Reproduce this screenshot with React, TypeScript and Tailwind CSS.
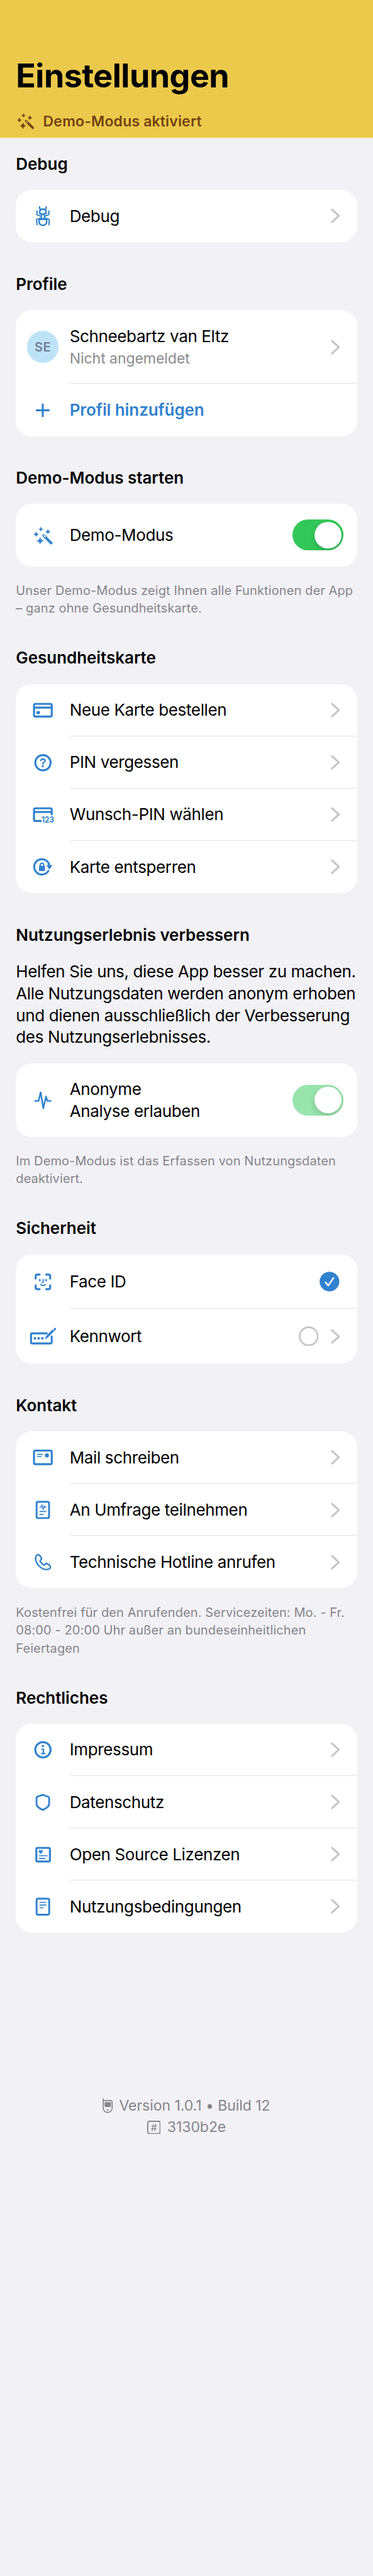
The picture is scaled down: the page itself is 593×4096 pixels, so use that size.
import type { ReactNode } from "react";

const stroke = {
  fill: "none",
  stroke: "currentColor",
  strokeWidth: 6,
  strokeLinecap: "round" as const,
  strokeLinejoin: "round" as const,
};

function Icon({ children, className = "h-[50.6px] w-[50.6px]" }: { children: ReactNode; className?: string }) {
  return (
    <svg viewBox="0 0 96 96" className={`shrink-0 ${className}`} {...stroke}>
      {children}
    </svg>
  );
}

const Star = ({ x, y, rx, ry }: { x: number; y: number; rx: number; ry: number }) => (
  <path
    d={`M${x} ${y - ry} Q${x + rx * 0.16} ${y - ry * 0.16} ${x + rx} ${y} Q${x + rx * 0.16} ${y + ry * 0.16} ${x} ${y + ry} Q${x - rx * 0.16} ${y + ry * 0.16} ${x - rx} ${y} Q${x - rx * 0.16} ${y - ry * 0.16} ${x} ${y - ry}Z`}
    fill="currentColor"
    strokeWidth="1.2"
  />
);

const WandShapes = ({ tip }: { tip: string }) => (
  <>
    <Star x={41.5} y={29.3} rx={6} ry={5.8} />
    <Star x={63} y={37} rx={7} ry={6.8} />
    <Star x={27.5} y={44.8} rx={7} ry={6.8} />
    <Star x={39.5} y={64.3} rx={10} ry={9.8} />
    <path d="M50 48.2 L73 71" strokeWidth="8" />
    <path d="M50.3 48.5 L55 53.2" stroke={tip} strokeWidth="2.6" />
  </>
);

const BugIcon = () => (
  <Icon>
    <path d="M38 20.5 C36.5 24 38 27 42 30 M57.5 20.5 C59 24 57.5 27 53.5 30" strokeWidth="4" />
    <path d="M47.8 27.5 C41 27.5 38.2 31 38.2 36 C38.2 40 39 42.3 42 42.3 H53.6 C56.5 42.3 57.4 40 57.4 36 C57.4 31 54.5 27.5 47.8 27.5Z" strokeWidth="4.6" />
    <path d="M44.5 44 L42.8 50 L45 56.5 M51 44 L52.8 50 L50.6 56.5" strokeWidth="4" />
    <path d="M30 33.5 V42.5 Q30 44.6 32 45.3 L41.5 49 M65.8 33.5 V42.5 Q65.8 44.6 63.8 45.3 L54 49" strokeWidth="4" />
    <path d="M42.5 54.5 L31 57.8 Q28.4 58.8 28.6 61 L30.2 74.5 M53.3 54.5 L64.8 57.8 Q67.4 58.8 67.2 61 L65.6 74.5" strokeWidth="4" />
    <path d="M40.5 58.3 H55.2 Q59.5 58.3 59.5 63 C59.5 71 55 76.5 47.8 76.5 C40.6 76.5 36.2 71 36.2 63 Q36.2 58.3 40.5 58.3Z" strokeWidth="4.8" />
  </Icon>
);

const PlusIcon = () => (
  <Icon>
    <path d="M47.3 30.5 V66 M29 48.3 H65.5" strokeWidth="6" />
  </Icon>
);

const WandIcon = () => (
  <Icon>
    <WandShapes tip="#fff" />
  </Icon>
);

const CardIcon = () => (
  <Icon>
    <rect x="21" y="29" width="53.5" height="38" rx="4" />
    <path d="M21 40 H74.5" strokeLinecap="butt" />
    <rect x="28" y="50.7" width="11" height="9.3" rx="2.5" fill="currentColor" stroke="none" />
  </Icon>
);

const QuestionIcon = () => (
  <Icon>
    <circle cx="48" cy="48.8" r="23.1" />
    <path d="M41.6 42.4 C42 39 44.5 37.9 47.6 37.9 C51.6 37.9 54.5 39.8 54.5 42.9 C54.5 47.6 47.6 47.6 47.6 52" strokeWidth="4.4" />
    <circle cx="47.6" cy="59.2" r="3.2" fill="currentColor" stroke="none" />
  </Icon>
);

const PinIcon = () => (
  <Icon>
    <path d="M74.5 50 V33 Q74.5 29 70.5 29 H25 Q21 29 21 33 V63 Q21 67 25 67 H44" strokeLinecap="butt" />
    <path d="M21 40 H74.5" strokeLinecap="butt" />
    <text
      x="43.8"
      y="71.8"
      textLength="37.6"
      lengthAdjust="spacingAndGlyphs"
      fontSize="25"
      fontWeight="700"
      fill="currentColor"
      stroke="none"
    >
      123
    </text>
  </Icon>
);

const UnlockIcon = () => (
  <Icon>
    <path d="M67.6 45 A23.1 23.1 0 1 0 64.4 60.2" />
    <path d="M60.5 44 H74.5 L67.5 54.5Z" fill="currentColor" strokeWidth="2.4" />
    <rect x="36" y="44.8" width="18" height="16" rx="2.2" fill="currentColor" stroke="none" />
    <path d="M39.8 46 V42 C39.8 35.4 50.2 35.4 50.2 42 V46" strokeWidth="3.6" />
  </Icon>
);

const PulseIcon = () => (
  <Icon>
    <path d="M24.5 50.2 H34.8 L41 24.5 L49 72.5 L57.3 37 L61 50.2 H71.2" strokeWidth="4.8" />
  </Icon>
);

const FaceIcon = () => (
  <Icon>
    <path d="M26 38 V31 Q26 26 31 26 H37.8 M58 26 H64.7 Q69.7 26 69.7 31 V38 M69.7 58.3 V65 Q69.7 70 64.7 70 H58 M37.8 70 H31 Q26 70 26 65 V58.3" />
    <path d="M38.5 41.3 V44.3 M57.2 41.3 V44.3" strokeWidth="4.8" />
    <path d="M48.6 40.6 V48.6 Q48.6 50.6 45.4 50.6" strokeWidth="3.6" />
    <path d="M40.8 56 Q48.2 61.5 55.6 56" strokeWidth="3.6" />
  </Icon>
);

const PasswordIcon = () => (
  <Icon className="h-[50.6px] w-[50.6px] overflow-visible">
    <path d="M62 40 H16 Q12 40 12 44 V66.5 Q12 70.5 16 70.5 H70.4 Q74.4 70.5 74.4 66.5 V47" strokeLinecap="butt" />
    <circle cx="23.8" cy="55.2" r="3.9" fill="currentColor" stroke="none" />
    <circle cx="35" cy="55.2" r="3.9" fill="currentColor" stroke="none" />
    <circle cx="46.2" cy="55.2" r="3.9" fill="currentColor" stroke="none" />
    <path d="M54.6 56.2 L58.5 48.4 L76.5 29.6 L81 33.4 L62.5 52.2Z" fill="currentColor" strokeWidth="1.6" />
    <path d="M82.6 28.6 L84.6 26.6" strokeWidth="6" />
  </Icon>
);

const MailIcon = () => (
  <Icon>
    <rect x="21" y="27.5" width="53.5" height="41" rx="3.5" />
    <path d="M31.5 39.2 H46.5 M31.5 46 H42.5" strokeWidth="3.2" />
    <circle cx="59.8" cy="42.2" r="6.1" fill="currentColor" stroke="none" />
  </Icon>
);

const SurveyIcon = () => (
  <Icon>
    <rect x="28.8" y="24.8" width="37.6" height="49" rx="4" strokeWidth="5.6" />
    <path d="M38.5 41 H42.3 L45 33.5 L48.5 48 L51.8 36.5 L53.6 41 H57.5" strokeWidth="2.8" />
    <path d="M38.5 54 H57 M38.5 62.8 H48.5" strokeWidth="3.2" />
  </Icon>
);

const PhoneIcon = () => (
  <Icon>
    <path
      d="M34 26.6 C29.5 26.4 25.8 30.5 25.8 38 C25.8 54 43 71.4 58.5 71.4 C66.5 71.4 70.6 67.5 70.6 63.6 C70.6 62 69.8 60.6 68.4 59.4 L61.5 54 C59.5 52.6 57.8 52.8 56.2 54.4 L53.4 57.2 C52.4 58.2 51 58.2 49.6 57.2 C46.2 54.8 42.6 51.2 40 47.6 C39 46.2 39 44.9 40 43.9 L42.8 41.2 C44.3 39.7 44.4 38 43.2 36.2 L38.2 29 C37 27.3 35.8 26.6 34 26.6Z"
      strokeWidth="4.6"
    />
  </Icon>
);

const InfoIcon = () => (
  <Icon>
    <circle cx="48" cy="48" r="23.1" />
    <circle cx="47.8" cy="36.7" r="3.6" fill="currentColor" stroke="none" />
    <path d="M44.8 46 H49.3 V59.4 M44 59.4 H54" strokeWidth="4.2" />
  </Icon>
);

const ShieldIcon = () => (
  <Icon>
    <path
      d="M47.5 26.3 L64.2 32.2 Q66.6 33 66.6 35.6 V53 C66.6 62 58.5 66.2 47.5 72 C36.5 66.2 28.6 62 28.6 53 V35.6 Q28.6 33 31 32.2Z"
      strokeWidth="5.4"
    />
  </Icon>
);

const LicenseIcon = () => (
  <Icon>
    <rect x="28" y="29" width="41" height="41" rx="4" />
    <path d="M41.4 46 C37 43 35.6 41 35.6 38.8 C35.6 35.4 39.6 34.6 41.4 37.6 C43.2 34.6 47.2 35.4 47.2 38.8 C47.2 41 45.8 43 41.4 46Z" fill="currentColor" strokeWidth="1" />
    <path d="M37 52.7 H60.3 M37 60.8 H54.3" strokeWidth="3.2" />
  </Icon>
);

const TermsIcon = () => (
  <Icon>
    <rect x="28.8" y="24.5" width="38" height="48.5" rx="4" strokeWidth="5.6" />
    <path d="M39 36 H57 M39 44 H57 M39 52.2 H48.3" strokeWidth="3.2" />
  </Icon>
);

const Chevron = () => (
  <svg viewBox="0 0 28 46" className="h-[24.3px] w-[14.8px] shrink-0 text-[#c5c5c7]" {...stroke}>
    <path d="M3.5 4 L24 23 L3.5 42" strokeWidth="5.8" />
  </svg>
);

function Toggle({ dimmed = false }: { dimmed?: boolean }) {
  return (
    <div
      className={`mr-[-5px] flex h-[49px] w-[80.6px] shrink-0 items-center justify-end overflow-hidden rounded-full pr-[3.2px] ${dimmed ? "bg-[#99e4ac]" : "bg-[#34c759]"}`}
    >
      <div className="size-[42.6px] rounded-full bg-white shadow-[0_4px_10px_rgba(0,0,0,0.16)]" />
    </div>
  );
}

function Card({ children }: { children: ReactNode }) {
  return <div className="overflow-hidden rounded-[25.3px] bg-white">{children}</div>;
}

function Row({
  icon,
  label,
  trailing = <Chevron />,
  height = "h-[83.1px]",
  divider = false,
}: {
  icon: ReactNode;
  label: ReactNode;
  trailing?: ReactNode;
  height?: string;
  divider?: boolean;
}) {
  return (
    <div className={`flex pl-[17.4px] ${height}`}>
      <div className="flex w-[50.6px] shrink-0 items-center text-[#3182ce]">{icon}</div>
      <div
        className={`ml-[17.4px] flex min-w-0 flex-1 items-center justify-between pr-[26.9px] ${divider ? "border-b border-[#e2e2e4] pt-px" : ""}`}
      >
        <div className="pt-px text-[26px] leading-[34.8px] tracking-[-0.014em]">{label}</div>
        {trailing}
      </div>
    </div>
  );
}

function Heading({ children }: { children: ReactNode }) {
  return <h2 className="pt-[0.6px] text-[26px] font-semibold leading-[34.8px] tracking-[-0.002em]">{children}</h2>;
}

function Note({ children }: { children: ReactNode }) {
  return (
    <p className="mt-[23.6px] whitespace-nowrap pt-[0.6px] text-[20px] leading-[28.5px] tracking-[0.005em] text-[#86858a]">
      {children}
    </p>
  );
}

function Section({ title, className = "mt-[49.4px]", children }: { title: string; className?: string; children: ReactNode }) {
  return (
    <section className={className}>
      <Heading>{title}</Heading>
      <div className="mt-[23.4px]">{children}</div>
    </section>
  );
}

export default function App() {
  return (
    <div className="min-h-[4096px] w-full bg-[#f2f1f6] font-['Inter',sans-serif] text-black">
      <header className="h-[219px] bg-[#ecc94b] px-[25.3px] pt-[91px]">
        <h1 className="text-[52px] font-bold leading-[60px] tracking-[-0.0103em]">Einstellungen</h1>
        <div className="ml-[-7.3px] mt-6 flex h-[34.6px] items-center gap-[5.6px] text-[#744210]">
          <Icon className="size-[45px]">
            <WandShapes tip="#ecc94b" />
          </Icon>
          <span className="pt-px text-[23px] font-semibold leading-[34.6px] tracking-[0.0073em]">Demo-Modus aktiviert</span>
        </div>
      </header>

      <main className="px-[25.3px]">
        <Section title="Debug" className="pt-[24.3px]">
          <Card>
            <Row icon={<BugIcon />} label="Debug" />
          </Card>
        </Section>

        <Section title="Profile" className="mt-[49px]">
          <Card>
            <Row
              height="h-[117.5px]"
              divider
              icon={
                <div className="flex size-[50.6px] items-center justify-center rounded-full bg-[#bee3f8] text-[20px] font-semibold tracking-[0.02em] text-[#718096]">
                  SE
                </div>
              }
              label={
                <>
                  <div>Schneebartz van Eltz</div>
                  <div className="mt-[3px] text-[23px] leading-[31.6px] tracking-[-0.002em] text-[#8a8a8e]">
                    Nicht angemeldet
                  </div>
                </>
              }
            />
            <Row
              icon={<PlusIcon />}
              label={<span className="font-semibold tracking-[-0.0036em] text-[#3182ce]">Profil hinzufügen</span>}
              trailing={null}
            />
          </Card>
        </Section>

        <Section title="Demo-Modus starten" className="mt-[49px]">
          <Card>
            <Row height="h-[99.3px]" icon={<WandIcon />} label="Demo-Modus" trailing={<Toggle />} />
          </Card>
        </Section>
        <Note>
          Unser Demo-Modus zeigt Ihnen alle Funktionen der App
          <br />– ganz ohne Gesundheitskarte.
        </Note>

        <Section title="Gesundheitskarte" className="mt-[47px]">
          <Card>
            <Row icon={<CardIcon />} label="Neue Karte bestellen" divider />
            <Row icon={<QuestionIcon />} label="PIN vergessen" divider />
            <Row icon={<PinIcon />} label="Wunsch-PIN wählen" divider />
            <Row icon={<UnlockIcon />} label="Karte entsperren" />
          </Card>
        </Section>

        <Section title="Nutzungserlebnis verbessern">
          <p className="whitespace-nowrap text-[26px] leading-[34.75px] tracking-[-0.0143em]">
            Helfen Sie uns, diese App besser zu machen.
            <br />
            Alle Nutzungsdaten werden anonym erhoben
            <br />
            und dienen ausschließlich der Verbesserung
            <br />
            des Nutzungserlebnisses.
          </p>
          <div className="mt-[23.4px]">
            <Card>
              <Row
                height="h-[117.1px]"
                icon={<PulseIcon />}
                label={
                  <>
                    Anonyme
                    <br />
                    Analyse erlauben
                  </>
                }
                trailing={<Toggle dimmed />}
              />
            </Card>
          </div>
        </Section>
        <Note>
          Im Demo-Modus ist das Erfassen von Nutzungsdaten
          <br />
          deaktiviert.
        </Note>

        <Section title="Sicherheit" className="mt-[47px]">
          <Card>
            <Row
              height="h-[86.7px]"
              divider
              icon={<FaceIcon />}
              label="Face ID"
              trailing={
                <svg viewBox="0 0 60 60" className="mr-[1px] size-[31.6px]">
                  <circle cx="30" cy="30" r="29.7" fill="#3182ce" />
                  <path
                    d="M18.3 32.5 L26.2 42 L42 19"
                    fill="none"
                    stroke="#fff"
                    strokeWidth="4.6"
                    strokeLinecap="round"
                    strokeLinejoin="round"
                  />
                </svg>
              }
            />
            <Row
              height="h-[86.8px]"
              icon={<PasswordIcon />}
              label="Kennwort"
              trailing={
                <div className="flex items-center gap-[19.8px]">
                  <svg viewBox="0 0 60 60" className="size-[31.6px] text-[#c5c5c7]" {...stroke}>
                    <circle cx="30" cy="30" r="27.3" strokeWidth="5" />
                  </svg>
                  <Chevron />
                </div>
              }
            />
          </Card>
        </Section>

        <Section title="Kontakt" className="mt-[49.2px]">
          <Card>
            <Row icon={<MailIcon />} label="Mail schreiben" divider />
            <Row icon={<SurveyIcon />} label="An Umfrage teilnehmen" divider />
            <Row icon={<PhoneIcon />} label="Technische Hotline anrufen" />
          </Card>
        </Section>
        <Note>
          Kostenfrei für den Anrufenden. Servicezeiten: Mo. - Fr.
          <br />
          08:00 - 20:00 Uhr außer an bundeseinheitlichen
          <br />
          Feiertagen
        </Note>

        <Section title="Rechtliches" className="mt-[47px]">
          <Card>
            <Row icon={<InfoIcon />} label="Impressum" divider />
            <Row icon={<ShieldIcon />} label="Datenschutz" divider />
            <Row icon={<LicenseIcon />} label="Open Source Lizenzen" divider />
            <Row icon={<TermsIcon />} label="Nutzungsbedingungen" />
          </Card>
        </Section>

        <footer className="mt-[257.6px] flex flex-col items-center text-[23px] leading-[34.6px] tracking-[-0.002em] text-[#86858a]">
          <div className="flex items-center gap-[9.6px]">
            <svg viewBox="0 0 31 46" className="h-[24px] w-[16.4px]" {...stroke}>
              <path d="M1.7 2 V28 C1.7 39 7 43.8 15.5 43.8 C24 43.8 29.2 39 29.2 28 V12 Q29.2 8 25 8 H1.7" strokeWidth="3.2" />
              <rect x="6" y="12.3" width="19.4" height="15" rx="1.8" fill="currentColor" stroke="none" />
              <path d="M12.6 36.4 H18.4" strokeWidth="2.8" />
            </svg>
            <span>Version 1.0.1 • Build 12</span>
          </div>
          <div className="flex items-center gap-[10.4px]">
            <svg viewBox="0 0 41 41" className="size-[21.6px]" {...stroke}>
              <rect x="1.8" y="1.8" width="37.4" height="37.4" rx="4.5" strokeWidth="3.6" />
              <path d="M18.8 10.5 L15 30.5 M25.8 10.5 L22 30.5 M13.5 16.5 H28.5 M12.5 24.5 H27.5" strokeWidth="2.4" />
            </svg>
            <span>3130b2e</span>
          </div>
        </footer>
      </main>
    </div>
  );
}
